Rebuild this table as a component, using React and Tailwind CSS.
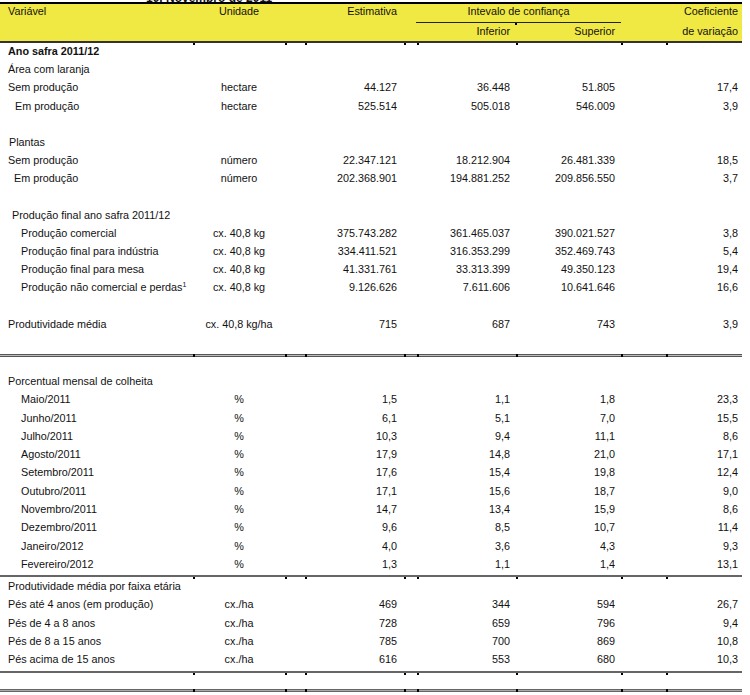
const cols = "grid grid-cols-[193px_92px_119px_111px_106px_119px]";

const ticks = [193, 285, 305, 404, 417, 516, 621, 666];

const Rule = ({ line, tickTop }) => (
	<div className="relative w-[742px]">
		<div className={line} />
		{ticks.map((x) => (
			<span
				key={x}
				className={`absolute w-[2px] h-[2px] bg-black ${tickTop}`}
				style={{ left: x }}
			/>
		))}
	</div>
);

const Row = ({ r, h }) => (
	<div className={`${cols} ${h} text-[#111]`}>
		<div className={`${r.pad || "pl-[8px]"} whitespace-nowrap ${r.bold ? "font-bold" : ""}`}>
			{r.label}
			{r.sup && <sup className="text-[7px] align-top leading-none relative top-[3px]">1</sup>}
		</div>
		<div className="text-center whitespace-nowrap">{r.unit}</div>
		<div className="text-right pr-[7px]">{r.est}</div>
		<div className="text-right pr-[5px]">{r.inf}</div>
		<div className="text-right pr-[6px]">{r.sup2}</div>
		<div className="text-right pr-[2px]">{r.cv}</div>
	</div>
);

const safra = [
	{ label: "Ano safra 2011/12", bold: true },
	{ label: "Área com laranja" },
	{ label: "Sem produção", unit: "hectare", est: "44.127", inf: "36.448", sup2: "51.805", cv: "17,4" },
	{ label: "Em produção", pad: "pl-[15px]", unit: "hectare", est: "525.514", inf: "505.018", sup2: "546.009", cv: "3,9" },
	{},
	{ label: "Plantas", pad: "pl-[9px]" },
	{ label: "Sem produção", unit: "número", est: "22.347.121", inf: "18.212.904", sup2: "26.481.339", cv: "18,5" },
	{ label: "Em produção", pad: "pl-[14px]", unit: "número", est: "202.368.901", inf: "194.881.252", sup2: "209.856.550", cv: "3,7" },
	{},
	{ label: "Produção final ano safra 2011/12", pad: "pl-[12px]" },
	{ label: "Produção comercial", pad: "pl-[21px]", unit: "cx. 40,8 kg", est: "375.743.282", inf: "361.465.037", sup2: "390.021.527", cv: "3,8" },
	{ label: "Produção final para indústria", pad: "pl-[21px]", unit: "cx. 40,8 kg", est: "334.411.521", inf: "316.353.299", sup2: "352.469.743", cv: "5,4" },
	{ label: "Produção final para mesa", pad: "pl-[21px]", unit: "cx. 40,8 kg", est: "41.331.761", inf: "33.313.399", sup2: "49.350.123", cv: "19,4" },
	{ label: "Produção não comercial e perdas", sup: true, pad: "pl-[21px]", unit: "cx. 40,8 kg", est: "9.126.626", inf: "7.611.606", sup2: "10.641.646", cv: "16,6" },
	{},
	{ label: "Produtividade média", unit: "cx. 40,8 kg/ha", est: "715", inf: "687", sup2: "743", cv: "3,9" },
];

const meses = [
	{ label: "Porcentual mensal de colheita" },
	["Maio/2011", "1,5", "1,1", "1,8", "23,3"],
	["Junho/2011", "6,1", "5,1", "7,0", "15,5"],
	["Julho/2011", "10,3", "9,4", "11,1", "8,6"],
	["Agosto/2011", "17,9", "14,8", "21,0", "17,1"],
	["Setembro/2011", "17,6", "15,4", "19,8", "12,4"],
	["Outubro/2011", "17,1", "15,6", "18,7", "9,0"],
	["Novembro/2011", "14,7", "13,4", "15,9", "8,6"],
	["Dezembro/2011", "9,6", "8,5", "10,7", "11,4"],
	["Janeiro/2012", "4,0", "3,6", "4,3", "9,3"],
	["Fevereiro/2012", "1,3", "1,1", "1,4", "13,1"],
].map((m) =>
	Array.isArray(m)
		? { label: m[0], pad: "pl-[21px]", unit: "%", est: m[1], inf: m[2], sup2: m[3], cv: m[4] }
		: m
);

const faixas = [
	{ label: "Produtividade média por faixa etária" },
	{ label: "Pés até 4 anos (em produção)", unit: "cx./ha", est: "469", inf: "344", sup2: "594", cv: "26,7" },
	{ label: "Pés de 4 a 8 anos", unit: "cx./ha", est: "728", inf: "659", sup2: "796", cv: "9,4" },
	{ label: "Pés de 8 a 15 anos", unit: "cx./ha", est: "785", inf: "700", sup2: "869", cv: "10,8" },
	{ label: "Pés acima de 15 anos", unit: "cx./ha", est: "616", inf: "553", sup2: "680", cv: "10,3" },
];

const App = () => {
	return (
		<div className="w-[750px] h-[695px] bg-white overflow-hidden font-['Liberation_Sans',Arial,sans-serif] text-[10.8px] text-[#111]">
			{/* title cut off at the top */}
			<div className="h-[2px] overflow-hidden">
				<div className="-mt-[8px] pl-[146px] text-[12px] leading-[12px] font-bold whitespace-nowrap">
					10, Novembro de 2011
				</div>
			</div>

			{/* header */}
			<div className="w-[742px] border-t-2 border-black bg-[#f0e843]">
				<div className={`${cols} h-[19px] leading-[14px]`}>
					<div className="pl-[8px]">Variável</div>
					<div className="text-center">Unidade</div>
					<div className="text-right pr-[7px]">Estimativa</div>
					<div className="col-span-2 flex flex-col justify-between">
						<div className="text-center pl-[12px]">Intevalo de confiança</div>
						<div className="relative ml-[12px] mr-0 h-px bg-[#222]">
							<span className="absolute left-[99px] top-px w-[2px] h-[2px] bg-black" />
						</div>
					</div>
					<div className="text-right pr-[2px]">Coeficiente</div>
				</div>
				<div className={`${cols} h-[18px] leading-[14px] pt-px`}>
					<div />
					<div />
					<div />
					<div className="text-right pr-[5px]">Inferior</div>
					<div className="text-right pr-[6px]">Superior</div>
					<div className="text-right pr-[2px]">de variação</div>
				</div>
			</div>
			<Rule line="h-[2px] bg-[#333]" tickTop="top-[2px]" />

			<div className="leading-[18.2px] -mt-px">
				{safra.map((r, i) => (
					<Row key={i} r={r} h="h-[18.2px]" />
				))}
			</div>

			<div className="h-[21px]" />
			<Rule line="h-[3px] border-y border-[#555] bg-[#bdbdbd]" tickTop="top-[0px] h-[3px]" />
			<div className="h-[15px]" />

			<div className="leading-[18.3px]">
				{meses.map((r, i) => (
					<Row key={i} r={r} h="h-[18.3px]" />
				))}
			</div>

			<div className="h-[2px]" />
			<Rule line="h-[2px] bg-[#666]" tickTop="top-[2px]" />

			<div className="leading-[18.2px]">
				{faixas.map((r, i) => (
					<Row key={i} r={r} h="h-[18.2px]" />
				))}
			</div>

			<div className="h-[3px]" />
			<Rule line="h-[2px] bg-[#666]" tickTop="top-[2px]" />
			<div className="h-[16px]" />
			<Rule line="h-[3px] border-y border-[#666] bg-[#aaa]" tickTop="top-[0px] h-[3px]" />
		</div>
	);
};

export default App;
